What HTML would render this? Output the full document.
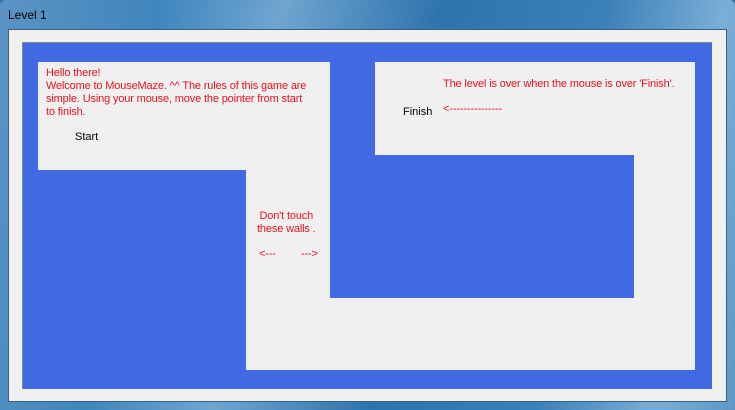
<!DOCTYPE html>
<html><head><style>
body{margin:0;width:735px;height:410px;overflow:hidden;background:#2f74ab;font-family:"Liberation Sans",sans-serif;font-size:11px;}
.frame{position:absolute;left:0;top:0;width:735px;height:410px;background:linear-gradient(100deg,#5b94c4 0%,#3f86bd 20%,#6fa6d0 35%,#2e73ad 55%,#3b80b8 75%,#7aaed6 90%,#5d98c8 100%);border-radius:6px 6px 0 0;}
.title{position:absolute;left:8px;top:8px;color:#000;font-size:12px;}
.client{position:absolute;left:8px;top:29px;width:719px;height:373px;background:#f0f0f0;border:1px solid #3a5f80;box-sizing:border-box;}
.blue{position:absolute;left:22px;top:42px;width:690px;height:347px;background:#4169e1;border-top:1px solid #888;border-left:1px solid #888;box-sizing:border-box;}
.l{position:absolute;background:#f0f0f0;}
.t{position:absolute;color:#e8121e;white-space:nowrap;line-height:13px;letter-spacing:-0.15px;}
.k{position:absolute;color:#000;}
</style></head><body>
<div class="frame"></div>
<div class="title">Level 1</div>
<div class="client"></div>
<div class="blue"></div>
<div class="l" style="left:38px;top:62px;width:292px;height:108px"></div>
<div class="l" style="left:246px;top:170px;width:84px;height:200px"></div>
<div class="l" style="left:246px;top:298px;width:449px;height:72px"></div>
<div class="l" style="left:375px;top:62px;width:320px;height:93px"></div>
<div class="l" style="left:634px;top:155px;width:61px;height:143px"></div>
<div class="t" style="left:46px;top:67px">Hello there!<br>Welcome to MouseMaze. ^^ The rules of this game are<br>simple. Using your mouse, move the pointer from start<br>to finish.</div>
<div class="k" style="left:75px;top:131px">Start</div>
<div class="t" style="left:257px;top:210px;text-align:center">Don't touch<br>these walls .</div>
<div class="t" style="left:259px;top:248px">&lt;---</div>
<div class="t" style="left:301px;top:248px">---&gt;</div>
<div class="t" style="left:443px;top:78px">The level is over when the mouse is over 'Finish'.</div>
<div class="k" style="left:403px;top:106px">Finish</div>
<div class="t" style="left:443px;top:103px">&lt;---------------</div>
</body></html>
